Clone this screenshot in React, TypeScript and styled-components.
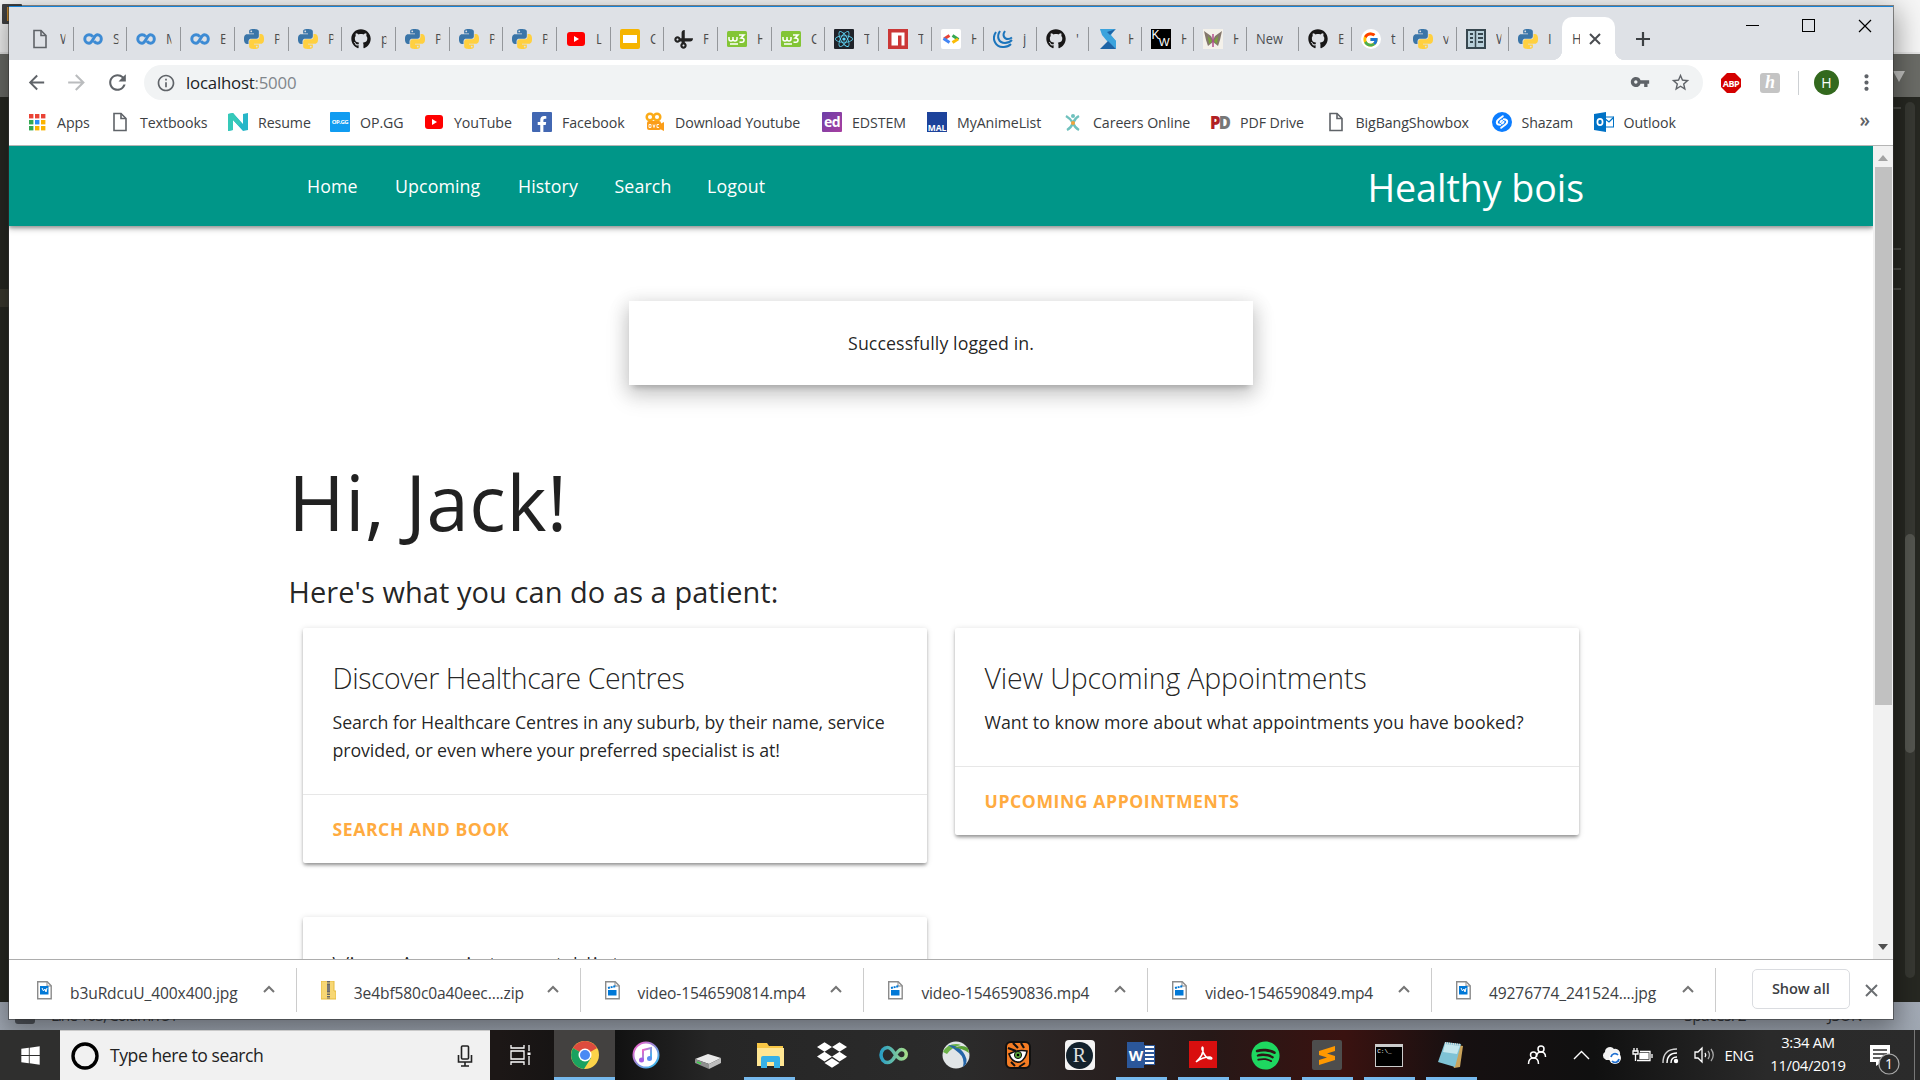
import React from 'react';
import styled, { createGlobalStyle, css } from 'styled-components';
import { FaGithub, FaReact, FaDropbox, FaSpotify, FaWindows, FaFacebookF, FaCut } from 'react-icons/fa';
import { FcGoogle } from 'react-icons/fc';
import { MdVpnKey, MdStarBorder, MdMoreVert, MdInfoOutline, MdArrowBack, MdArrowForward, MdRefresh } from 'react-icons/md';

const Global = createGlobalStyle`
  *, *::before, *::after { box-sizing: border-box; }
  body { margin: 0; overflow: hidden; font-family: 'Open Sans', 'Noto Sans', sans-serif; }
  svg { display: block; flex: none; }
  h1, h2, h3, p { margin: 0; font-weight: 400; }
`;

const Desktop = styled.div`
  position: relative; width: 1920px; height: 1080px; overflow: hidden;
  display: flex; flex-direction: column; background: #272822;
`;
const EditorTitle = styled.div`
  height: 54px; background: #f6f6f6; border-bottom: 2px solid #e6e6e6; padding: 4px 2px;
  display: flex; align-items: flex-start;
`;
const EditorLogo = styled.div`width: 20px; height: 20px; background: #424242; border-radius: 1px; border-left: 5px solid #424242; display: flex; &::before { content: ''; width: 6px; height: 14px; margin-top: 3px; background: #c98a2a; }`;
const EditorTabs = styled.div`
  height: 43px; background: #6b6c67; display: flex; justify-content: flex-end; align-items: center; padding-right: 15px;
`;
const EditorBody = styled.div`flex: 1; display: flex; justify-content: space-between; background: #272822;`;
const Gutter = styled.div`width: 9px; padding-top: 192px; &::before { content: ''; display: block; height: 18px; background: #3a392f; }`;
const Minimap = styled.div`width: 12px; display: flex; flex-direction: column; gap: 18px; padding-top: 10px; i { height: 2px; width: 8px; background: #4a4b45; }
  i:nth-child(2) { margin-top: 121px; }`;
const EditorScroll = styled.div`width: 10px; margin: 5px 5px 24px 0; border-radius: 5px; background: #383933; padding-top: 432px; &::before { content: ''; display: block; height: 219px; border-radius: 5px; background: #565751; }`;
const EditorSide = styled.div`display: flex; width: 27px;`;
const EditorStatus = styled.div`
  height: 28px; background: linear-gradient(#a4abb7, #a0a8b3); display: flex; align-items: flex-start; padding: 1px 58px 0 15px;
  font-size: 16px; line-height: 24px; color: #33363b;
`;
const StatusIcon = styled.div`width: 20px; height: 21px; border-radius: 3px; background: #50545b; margin-right: 16px;`;
const StatusText = styled.span<{ $ml?: string; $ls?: number }>`margin-left: ${p => p.$ml ?? '0'}; letter-spacing: ${p => p.$ls ?? -0.6}px; font-size: 15.5px;`;

const Browser = styled.div`
  position: absolute; left: 9px; top: 6px; width: 1884px; height: 1013px; background: #fff;
  border-top: 1px solid #1883d7; display: flex; flex-direction: column;
  box-shadow: 0 0 0 1px rgba(50,50,50,.55), 0 8px 26px 4px rgba(0,0,0,.38);
`;

/* tab strip */
const TabStrip = styled.div`height: 53px; background: #dee1e6; display: flex; padding-left: 12px; position: relative;`;
const Tab = styled.div<{ $w: number; $last?: boolean }>`
  width: ${p => p.$w}px; margin: 20px 0 9px; height: 24px; padding-left: 9px; display: flex; align-items: center; gap: 10px;
  border-right: ${p => (p.$last ? 0 : 1)}px solid #94979b; flex: none; overflow: hidden; font-size: 14.3px; color: #4a4d51;
`;
const TabIcon = styled.span`width: 20px; height: 20px; display: grid; place-items: center; flex: none;`;
const TabLetter = styled.span<{ $w?: number }>`width: ${p => p.$w ?? 6}px; overflow: hidden; white-space: nowrap; line-height: 20px; transform: scaleX(.9); transform-origin: left;`;
const Tilted = styled.span`transform: rotate(-45deg);`;
const ActiveTab = styled.div`
  width: 53px; height: 43px; margin-top: 10px; background: #fff; border-radius: 10px 10px 0 0; position: relative; flex: none;
  display: flex; align-items: center; gap: 8px; padding-left: 10px; font-size: 14.3px; color: #4a4d51;
  &::before, &::after { content: ''; position: absolute; bottom: 0; width: 10px; height: 10px; }
  &::before { left: -10px; background: radial-gradient(circle at 0 0, transparent 10px, #fff 10.5px); }
  &::after { right: -10px; background: radial-gradient(circle at 100% 0, transparent 10px, #fff 10.5px); }
`;
const NewTab = styled.div`margin: 24px 0 0 20px;`;
const WindowButtons = styled.div`margin-left: auto; display: flex; gap: 43px; padding: 12px 21px 0 0;`;

/* toolbar */
const Toolbar = styled.div`height: 43px; display: flex; align-items: center; padding: 2px 14px 0 16px; color: #5f6368; margin-bottom: 2px;`;
const NavIcons = styled.div`display: flex; gap: 16px; width: 119px; align-items: center;`;
const Omnibox = styled.div`
  width: 1559px; height: 35px; border-radius: 18px; background: #f1f3f4; display: flex; align-items: center; padding: 0 12px; flex: none;
`;
const Url = styled.span`margin-left: 10px; flex: 1; font-size: 16.8px; color: #202124; letter-spacing: -0.2px; em { font-style: normal; color: #80868b; }`;
const OmniIcons = styled.div`display: flex; gap: 20px; color: #5f6368;`;
const Extensions = styled.div`display: flex; align-items: center; flex: 1; margin-left: 17px;`;
const Honey = styled.span`width: 20px; height: 20px; border-radius: 3px; background: #c4c4c4; color: #fff; margin-left: 18px; font: italic 700 18px/19px 'Liberation Serif', serif; text-align: center; flex: none;`;
const Divider = styled.i`width: 1px; height: 24px; background: #cdd0d3; margin-left: 18px; margin-right: 15px; flex: none;`;
const Avatar = styled.span`width: 25px; height: 25px; border-radius: 50%; background: #33691e; color: #fff; font-size: 14px; display: grid; place-items: center; margin-right: 14px; flex: none;`;
const More3 = styled.span`width: 25px; flex: none; margin-left: 1px;`;

/* bookmarks */
const Bookmarks = styled.div`height: 41px; display: flex; align-items: center; padding: 0 0 6px 19px; border-bottom: 1px solid #b5b5b5;`;
const Bookmark = styled.div<{ $w: number }>`
  width: ${p => p.$w}px; flex: none; display: flex; align-items: center; gap: 10px; font-size: 14.2px; color: #3c4043;
  letter-spacing: -0.08px; white-space: nowrap;
`;
const More = styled.span`margin-left: auto; margin-right: 23px; font-size: 19px; line-height: 20px; font-weight: 600; color: #5f6368; margin-top: -4px;`;

/* page */
const Viewport = styled.div`height: 813px; display: flex; overflow: hidden; flex: none;`;
const Page = styled.div`width: 1864px; color: rgba(0,0,0,.87); overflow: hidden;`;
const Nav = styled.nav`
  height: 80px; background: #009688; color: #fff; padding: 0 280px; display: flex; justify-content: space-between; align-items: center;
  box-shadow: 0 2px 3px rgba(0,0,0,.22), 0 4px 6px rgba(0,0,0,.14), 0 1px 6px rgba(0,0,0,.16);
`;
const NavLinks = styled.div`display: flex; font-size: 17.8px; padding-left: 18px; padding-bottom: 1px;`;
const NavLink = styled.a<{ $w: number }>`width: ${p => p.$w}px; letter-spacing: 0.1px;`;
const Brand = styled.a`font-size: 37.6px; letter-spacing: -0.05px; margin-right: 9px; padding-top: 2px;`;
const Toast = styled.div`
  width: 624px; height: 84px; margin: 75px auto 0; background: #fff; display: grid; place-items: center; font-size: 17.8px; letter-spacing: 0.08px;
  box-shadow: 0 10px 21px 2px rgba(0,0,0,.14), 0 4px 18px 2px rgba(0,0,0,.12), 0 6px 6px -4px rgba(0,0,0,.2);
`;
const Container = styled.div`width: 1305px; margin: 0 auto;`;
const Greeting = styled.h1`font-size: 76px; line-height: 87px; margin-top: 73px; letter-spacing: 0.6px;`;
const Subheading = styled.h2`font-size: 29px; line-height: 34px; margin-top: 30px; letter-spacing: 0.06px;`;
const CardGrid = styled.div`display: grid; grid-template-columns: 624px 624px; column-gap: 28px; row-gap: 54px; padding: 19px 14px 0; align-items: start;`;
const Card = styled.section`
  background: #fff; border-radius: 2px;
  box-shadow: 0 2px 3px rgba(0,0,0,.2), 0 4px 4px -2px rgba(0,0,0,.2), 0 1px 6px rgba(0,0,0,.14);
`;
const CardContent = styled.div`padding: 30px;`;
const CardTitle = styled.h3<{ $ls: number }>`font-size: 28.5px; line-height: 40px; margin-bottom: 10px; font-weight: 300; white-space: nowrap; letter-spacing: ${p => p.$ls}px;`;
const CardText = styled.p<{ $ls: number }>`font-size: 17.8px; line-height: 28.1px; letter-spacing: ${p => p.$ls}px; white-space: pre-line;`;
const CardAction = styled.a`
  display: block; border-top: 1px solid rgba(160,160,160,.25); padding: 20px 30px; font-size: 17.6px; line-height: 28px; font-weight: 700; color: #ffab40;
  text-transform: uppercase; letter-spacing: 0.58px;
`;
const Scrollbar = styled.div`
  width: 20px; background: #f1f1f1; display: flex; flex-direction: column; justify-content: space-between; align-items: center; padding: 9px 0;
`;
const Thumb = styled.i`width: 17px; height: 538px; background: #c1c1c1; margin: 6px 0 auto;`;

/* downloads */
const Downloads = styled.div`height: 60px; border-top: 1px solid #adadad; display: flex; padding: 8px 0 7px 4px; flex: none;`;
const Download = styled.div`
  width: 283.8px; height: 44px; border-right: 1px solid #ccc; padding: 2px 21px 0 24px; display: flex; align-items: center; color: #3c4043; flex: none;
`;
const FileName = styled.span`flex: 1; margin: 4px 0 0 18px; font-size: 15.6px; letter-spacing: -0.13px; white-space: nowrap;`;
const ShowAll = styled.button`
  width: 98px; height: 40px; margin: 1px 15px 0 36px; border: 1px solid #dadce0; border-radius: 5px; background: #fff; padding: 0 0 2px;
  font: 600 14.6px 'Open Sans', sans-serif; color: #3c4043; letter-spacing: -0.1px;
`;

/* taskbar */
const Taskbar = styled.div`height: 50px; display: flex; background: linear-gradient(90deg, #1c1716 26%, #111 32%, #262626 37%, #2b2b2b 50%, #261817 63%, #3a1210 70%, #161011 76%, #101010 83%, #2a2a2a 92%, #2b2b2b); color: #fff; position: relative;`;
const Start = styled.div`width: 60px; background: #2f2f2e; display: grid; place-items: center;`;
const SearchBox = styled.div`
  width: 430px; background: #f1f1f1; border-top: 1px solid #c9c9c9; display: flex; align-items: center; padding: 0 17px 0 11px; color: #222;
  span { flex: 1; margin-left: 11px; font-size: 17.6px; letter-spacing: -0.45px; padding-bottom: 1px; }
`;
const TaskItem = styled.div<{ $active?: boolean; $open?: boolean; $w?: number }>`
  width: ${p => p.$w ?? 61.95}px; display: grid; place-items: center; flex: none;
  ${p => p.$open && css`background: linear-gradient(#76b9ed, #76b9ed) center bottom / 51px 3px no-repeat;`}
  ${p => p.$active && css`background: #434140; border-bottom: 3px solid #76b9ed; padding-top: 3px;`}
`;
const Tray = styled.div`margin-left: auto; display: flex; align-items: center; margin-right: 5px; border-right: 1px solid #777;`;
const TrayIcon = styled.span<{ $w: number }>`width: ${p => p.$w}px; display: grid; place-items: center; flex: none;`;
const Lang = styled.span`font-size: 14.8px; width: 32px; text-align: center; letter-spacing: -0.3px;`;
const Clock = styled.div`width: 90px; text-align: center; font-size: 14.8px; line-height: 23.5px; letter-spacing: -0.3px; padding-bottom: 2px; margin-left: 8px;`;
const Notifications = styled.div`width: 61px; padding-left: 16px; padding-top: 5px;`;

const pyPath = 'M14.25.18l.9.2.73.26.59.3.45.32.34.34.25.34.16.33.1.3.04.26.02.2-.01.13V8.5l-.05.63-.13.55-.21.46-.26.38-.3.31-.33.25-.35.19-.35.14-.33.1-.3.07-.26.04-.21.02H8.77l-.69.05-.59.14-.5.22-.41.27-.33.32-.27.35-.2.36-.15.37-.1.35-.07.32-.04.27-.02.21v3.06H3.17l-.21-.03-.28-.07-.32-.12-.35-.18-.36-.26-.36-.36-.35-.46-.32-.59-.28-.73-.21-.88-.14-1.05-.05-1.23.06-1.22.16-1.04.24-.87.32-.71.36-.57.4-.44.42-.33.42-.24.4-.16.36-.1.32-.05.24-.01h.16l.06.01h8.16v-.83H6.18l-.01-2.75-.02-.37.05-.34.11-.31.17-.28.25-.26.31-.23.38-.2.44-.18.51-.15.58-.12.64-.1.71-.06.77-.04.84-.02 1.27.05zm-6.3 1.98l-.23.33-.08.41.08.41.23.34.33.22.41.09.41-.09.33-.22.23-.34.08-.41-.08-.41-.23-.33-.33-.22-.41-.09-.41.09z';
const Python = () => (
  <svg width="20" height="20" viewBox="0 0 24 24">
    <path d={pyPath} fill="#3a75a8" /><path d={pyPath} fill="#ffd040" transform="rotate(180 12 12)" />
  </svg>
);
const Doc = () => (
  <svg width="20" height="20" viewBox="0 0 20 20" fill="none" stroke="#5f6368" strokeWidth="1.6">
    <path d="M4 1.5h7l5 5v12H4z" /><path d="M11 1.5v5h5" />
  </svg>
);
const Coursera = () => (
  <svg width="20" height="20" viewBox="0 0 20 20" fill="none" stroke="#3d8bd4" strokeWidth="3">
    <path d="M9.800 7.600C8.800 6.400 7.600 5.800 6 5.800a4.200 4.200 0 1 0 0 8.400c4 0 4.500-8.400 8.500-8.400a3.800 4.200 0 0 1 0 8.400c-1.700 0-2.700-.8-3.600-2" />
  </svg>
);
const YouTube = () => (
  <svg width="20" height="20" viewBox="0 0 20 20"><rect x="1" y="3" width="18" height="14" rx="3" fill="#f00" /><path d="M8 7l5 3-5 3z" fill="#fff" /></svg>
);
const Slides = () => (
  <svg width="20" height="20" viewBox="0 0 20 20"><rect width="20" height="20" rx="2" fill="#f5b400" /><rect x="3" y="6" width="14" height="8" fill="#fff" /></svg>
);
const Square = styled.span<{ $bg: string; $size: number; $r?: number; $end?: boolean; $ls?: number }>`
  width: 20px; height: 20px; flex: none; background: ${p => p.$bg}; color: #fff; border-radius: ${p => p.$r ?? 0}px;
  display: flex; align-items: ${p => (p.$end ? 'flex-end' : 'center')}; justify-content: center;
  font-size: ${p => p.$size}px; line-height: 1; font-weight: 700; letter-spacing: ${p => p.$ls ?? -0.5}px; overflow: hidden;
`;
const KwMark = styled.span`width: 20px; height: 20px; background: #000; color: #fff; display: flex; font-size: 12px; line-height: 12px; padding: 0 1px; font-family: 'Liberation Sans', sans-serif; b { font-weight: 400; } b + b { margin: 7px 0 0 -1px; font-size: 11.5px; }`;
const W3 = () => (
  <svg width="20" height="20" viewBox="0 0 20 20"><rect y="2" width="20" height="16" rx="1.500" fill="#83c536" />
    <path d="M2 8v2q0 2 2 2t2-2V8v2q0 2 2 2t2-2V8M12 6h5l-3 3q3.500 0 3 2.500T12.500 13M3 15h8" fill="none" stroke="#fff" strokeWidth="1.500" /></svg>
);
const Npm = () => (<svg width="20" height="20"><rect width="20" height="20" fill="#cb3837" /><path d="M3.500 3.500h13v13h-3v-10h-3.500v10H3.500z" fill="#fff" /></svg>);
const GDev = () => (
  <svg width="20" height="20" fill="none" strokeWidth="3"><rect width="20" height="20" rx="2" fill="#fff" />
    <path d="M8.500 6.500L3 10" stroke="#e94335" /><path d="M2.500 9.500l6 4" stroke="#4285f4" /><path d="M11.500 6.500l6 4" stroke="#34a853" /><path d="M17 10l-5.500 3.500" stroke="#fbbc05" /></svg>
);
const JQuery = () => (
  <svg width="20" height="20" fill="none" stroke="#1c75bc" strokeWidth="2"><path d="M3 3C-2 10 3 19 11 18q4 0 7-3" /><path d="M7 2C3 8 6 14 12 14q4 0 7-3" /><path d="M12 2c-3 4-1 8 3 8q2 0 4-1.500" /></svg>
);
const SLogo = () => (<svg width="20" height="20"><path d="M2 0h15l-4 6 5 6v8l-8-8-2-2z" fill="#3ba3dd" /><path d="M2 0l2 6 5 6 9 8V12l-6-6z" fill="#3ba3dd" /><path d="M2 20l8-8 8 8z" fill="#1d63a5" /><path d="M18 0l-6 6-3-3z" fill="#1d63a5" /></svg>);
const Butterfly = () => (
  <svg width="20" height="20"><rect width="20" height="20" fill="#f4f1ea" /><path d="M1 2l7 5 2 4 2-4 7-5-2 9-2 6-5-4-5 4-2-6z" fill="#84776c" /><path d="M5 7l4 5-3 3zM15 7l-4 5 3 3z" fill="#7ba43c" /><path d="M10 5v13" stroke="#b44a8c" strokeWidth="1.500" /></svg>
);
const Book = () => (
  <svg width="20" height="20"><rect x="1" y="1" width="18" height="18" fill="#b9d0da" stroke="#37474f" strokeWidth="2" /><path d="M9.500 1v18" stroke="#37474f" strokeWidth="1.500" />
    <path d="M12 5h5M12 9h5M12 13h5M4 5h3M4 9h3M4 13h3" stroke="#37474f" strokeWidth="2" /></svg>
);
const Apps = () => {
  const c = ['#ea4335', '#ea4335', '#ea4335', '#34a853', '#2a8cf7', '#fbb300', '#34a853', '#fbb300', '#fbb300'];
  return <svg width="19" height="20">{c.map((f, i) => <rect key={i} x={1 + (i % 3) * 6} y={2 + Math.floor(i / 3) * 6} width="4.400" height="4.400" fill={f} />)}</svg>;
};
const Resume = () => (<svg width="20" height="20"><path d="M0 2l5-1 10 11V2l5-1v17l-5 1L5 8v10l-5 1z" fill="#27b6c8" /><path d="M0 2l5-1 8 10-2 3-6-6v10l-5 1z" fill="#36c9b9" /></svg>);
const Facebook = styled.span`width: 20px; height: 20px; background: #4267b2; border-radius: 1px; display: flex; align-items: flex-end; justify-content: flex-end; padding-right: 2px; color: #fff; flex: none;`;
const Camera = () => (
  <svg width="20" height="20"><circle cx="5" cy="5" r="3.300" fill="none" stroke="#fbab18" strokeWidth="2.500" /><circle cx="12" cy="5" r="3.300" fill="none" stroke="#fbab18" strokeWidth="2.500" /><rect x="2" y="9" width="14" height="9" rx="2" fill="#fb9d18" /><path d="M15 12l4-2v9l-4-2z" fill="#fb9d18" /><path d="M4 12.500h2v3H4zM8 12.500l1 3 1-3M14 12.500h-2v3h2" fill="none" stroke="#fff" strokeWidth=".9" /></svg>
);
const Careers = () => (
  <svg width="20" height="20" fill="none" stroke="#6fc1bd" strokeWidth="2.400"><path d="M3 4q5 3 7 7 2-5 6-7M4 18q4-2 6-7 2 5 6 7" /><circle cx="10" cy="4" r="2" fill="#6fc1bd" stroke="none" /><circle cx="10" cy="11" r="2" fill="#f2a33a" stroke="none" /></svg>
);
const PdMark = styled.span`width: 20px; font-size: 18px; line-height: 20px; font-weight: 800; letter-spacing: -2px; color: #b11f24; flex: none; transform: scaleX(.92); transform-origin: left; em { font-style: normal; color: #777; }`;
const Shazam = () => (
  <svg width="20" height="20"><circle cx="10" cy="10" r="10" fill="#0c7dff" /><g fill="none" stroke="#fff" strokeWidth="2" strokeLinecap="round"><path d="M8.200 12.800q-3.400 0-3.400-2.600 0-1.500 2-3l4-3" /><path d="M11.800 7.200q3.400 0 3.400 2.600 0 1.500-2 3l-4 3" /><path d="M8.500 10q.8-1.500 1.500-1.500M11.500 10q-.8 1.500-1.500 1.500" /></g></svg>
);
const Outlook = () => (
  <svg width="20" height="20"><rect x="10" y="5" width="9.500" height="10" fill="#fff" stroke="#0072c6" /><path d="M10 6l5 4 5-5" fill="none" stroke="#0072c6" strokeWidth="1.300" /><path d="M0 2l12-2v20L0 18z" fill="#0072c6" /><ellipse cx="6" cy="10" rx="2.600" ry="3.200" fill="none" stroke="#fff" strokeWidth="1.700" /></svg>
);
const Cross = ({ s, w, c }: { s: number; w: number; c: string }) => (
  <svg width={s} height={s} viewBox={`0 0 ${s} ${s}`}><path d={`M1 1L${s - 1} ${s - 1}M${s - 1} 1L1 ${s - 1}`} stroke={c} strokeWidth={w} /></svg>
);
const Caret = () => (<svg width="12" height="12"><path d="M1 7l5-5 5 5" fill="none" stroke="#757575" strokeWidth="2" /></svg>);
const FileIcon = ({ kind }: { kind: string }) =>
  kind === 'zip' ? (
    <svg width="15" height="21"><path d="M0 0h13v10h2v8H0z" fill="#f7d774" stroke="#e6bb3f" /><path d="M7.500 0v18" stroke="#666" strokeWidth="3" strokeDasharray="1.500 1" /><rect x="6" y="4" width="3" height="6" fill="#777" /></svg>
  ) : (
    <svg width="15" height="21"><path d="M.7.7h9.500l4 4v13H.7z" fill="#fff" stroke="#8b8b8b" strokeWidth="1.400" /><path d="M10 1v4h4" fill="none" stroke="#8b8b8b" />
      {kind === 'jpg' ? <><rect x="3" y="5" width="8.500" height="8.500" fill="#0078d7" /><path d="M5 7l1.500 3L8 8l1 3 1-4" stroke="#fff" fill="none" /></> : <><rect x="3" y="9" width="8.500" height="5.500" fill="#0078d7" /><path d="M3 7l8-2" stroke="#0078d7" strokeWidth="2" strokeDasharray="2 .7" /></>}
    </svg>
  );

const icons: Record<string, React.ReactNode> = {
  doc: <Doc />, co: <Coursera />, py: <Python />, gh: <FaGithub size={20} color="#181717" />, yt: <YouTube />, sl: <Slides />,
  cut: <Tilted><FaCut size={17} color="#222" /></Tilted>, w3: <W3 />, re: <Square $bg="#20232a" $size={10} $r={1}><FaReact size={18} color="#61dafb" /></Square>, npm: <Npm />, gd: <GDev />, jq: <JQuery />,
  s: <SLogo />, kw: <KwMark><b>K</b><b>W</b></KwMark>, bf: <Butterfly />, g: <Square $bg="#fff" $size={10} $r={10}><FcGoogle size={17} /></Square>, bk: <Book />,
};
const tabs: [string, string, number][] = [
  ['doc', 'W', 52.8], ['co', 'S', 53.7], ['co', 'M', 53.7], ['co', 'E', 53.7], ['py', 'P', 53.7], ['py', 'P', 53.7], ['gh', 'p', 53.7], ['py', 'P', 53.7],
  ['py', 'P', 53.7], ['py', 'P', 53.7], ['yt', 'L', 53.7], ['sl', 'C', 53.7], ['cut', 'F', 53.7], ['w3', 'H', 53.7], ['w3', 'C', 53.7], ['re', 'T', 53.7],
  ['npm', 'T', 52.5], ['gd', 'H', 52.5], ['jq', 'j', 52.5], ['gh', "'", 52.5], ['s', 'H', 52.5], ['kw', 'H', 52.5], ['bf', 'H', 52.5], ['', 'New', 52.5],
  ['gh', 'E', 52.5], ['g', 't', 52.5], ['py', 'v', 52.5], ['bk', 'W', 52.5], ['py', 'I', 52.5],
];
const bookmarks: [React.ReactNode, string, number][] = [
  [<Apps />, 'Apps', 82], [<Doc />, 'Textbooks', 118], [<Resume />, 'Resume', 102], [<Square $bg="#109cf1" $size={6} $r={1}>OP.GG</Square>, 'OP.GG', 94],
  [<YouTube />, 'YouTube', 108], [<Facebook><FaFacebookF size={16} /></Facebook>, 'Facebook', 113], [<Camera />, 'Download Youtube', 177],
  [<Square $bg="linear-gradient(135deg,#6c3fa8,#a83fa0)" $size={14} $r={1}>ed</Square>, 'EDSTEM', 105], [<Square $bg="#1d439b" $size={8.5} $end $ls={0}>MAL</Square>, 'MyAnimeList', 136],
  [<Careers />, 'Careers Online', 147], [<PdMark>P<em>D</em></PdMark>, 'PDF Drive', 115.5], [<Doc />, 'BigBangShowbox', 166], [<Shazam />, 'Shazam', 102], [<Outlook />, 'Outlook', 100],
];
const files: [string, string][] = [
  ['jpg', 'b3uRdcuU_400x400.jpg'], ['zip', '3e4bf580c0a40eec....zip'], ['mp4', 'video-1546590814.mp4'], ['mp4', 'video-1546590836.mp4'], ['mp4', 'video-1546590849.mp4'], ['jpg', '49276774_241524....jpg'],
];

const Chrome = () => (
  <svg width="28" height="28" viewBox="0 0 28 28"><circle cx="14" cy="14" r="14" fill="#fcd349" /><path d="M14 14L1.900 7A14 14 0 0 1 26.100 7z" fill="#dd4b3e" /><path d="M2 7A14 14 0 0 0 13 28l7-11-6-3z" fill="#1aa260" /><circle cx="14" cy="14" r="6.500" fill="#fff" /><circle cx="14" cy="14" r="5" fill="#4a8af4" /></svg>
);
const Music = () => (
  <svg width="28" height="28"><defs><linearGradient id="mu" x2="1" y2="1"><stop stopColor="#fb5bc5" /><stop offset="1" stopColor="#27c3f3" /></linearGradient></defs><circle cx="14" cy="14" r="12.500" fill="#fff" stroke="url(#mu)" strokeWidth="2" /><path d="M11 19V9l8-2v10" fill="none" stroke="url(#mu)" strokeWidth="2" /><circle cx="9.500" cy="19" r="2.500" fill="#a55be5" /><circle cx="17.500" cy="17.500" r="2.500" fill="#5b8ef0" /></svg>
);
const Drive = () => (<svg width="28" height="28"><g transform="translate(0 3)"><path d="M1 15l13-5 13 4-12 6z" fill="#e9e9e9" /><path d="M1 15l14 5v5L1 19z" fill="#8f8f8f" /><path d="M27 14l-12 6v5l12-6z" fill="#bcbcbc" /><path d="M3 18l4 1.500" stroke="#3ad04a" strokeWidth="1.500" /></g></svg>);
const Folder = () => (<svg width="28" height="28"><path d="M1 2h10l2 3h14v20H1z" fill="#f9c846" /><path d="M1 7h27v18H1z" fill="#ffe693" /><path d="M5 27V17q0-2 2-2h15q2 0 2 2v10h-6v-6h-7v6z" fill="#36b1e7" /></svg>);
const Loop = () => (<svg width="30" height="24" viewBox="0 0 30 24" fill="none" strokeWidth="3.500"><defs><linearGradient id="lp"><stop stopColor="#2a9fc4" /><stop offset="1" stopColor="#a4dc8a" /></linearGradient></defs><path d="M15 15q-3 4.500-6.500 4.500a6.500 7.500 0 0 1 0-15C15 4.500 16 16 22.500 16a4.500 4.500 0 0 0 0-9.500Q19 6.500 15 15z" stroke="url(#lp)" /></svg>);
const Orb = () => (
  <svg width="28" height="28"><circle cx="14" cy="14" r="13.500" fill="#e1e5e7" /><path d="M1 11q4-8 13-8 3 0 5 1-9 2-14 9z" fill="#6bb248" /><path d="M6 4q10 0 15 7t3 12l-3 3q2-9-4-14T6 4z" fill="#2465a8" /><path d="M12 7q8-4 14 0l1 5q-7-5-15-5z" fill="#5aa136" /></svg>
);
const Tiger = () => (<svg width="26" height="28"><rect x="1" y="1" width="24" height="26" rx="5" fill="#f47c24" stroke="#111" strokeWidth="2" /><path d="M3 7l8 3M8 2l5 5M16 2l3 5" stroke="#111" strokeWidth="2.200" fill="none" /><path d="M4 13q9-5 18-3-1 8-7 11-8 1-11-8z" stroke="#111" strokeWidth="1.600" fill="#fff" /><path d="M20 22l-6 4M6 21l4 4" stroke="#111" strokeWidth="2" /><circle cx="13" cy="14" r="3.600" fill="#58a53a" stroke="#111" /><circle cx="13" cy="14" r="1.300" /></svg>);
const Round = styled.span`width: 30px; height: 30px; border-radius: 4px; background: #f4f4f4; display: grid; place-items: center; span { width: 27px; height: 27px; border-radius: 50%; background: #12212c; color: #ddd; font: 20px/27px 'Liberation Serif', serif; text-align: center; }`;
const WordIcon = styled.span`
  width: 28px; height: 26px; display: flex; align-items: stretch; font-size: 15px; font-weight: 700; line-height: 26px; color: #fff;
  span { width: 17px; background: #2b579a; text-align: center; } i { flex: 1; margin: 3px 0; border: 1.5px solid #2b579a; background: repeating-linear-gradient(#fff 0 2px, #2b579a 2px 4px); }
`;
const Acrobat = () => (<svg width="28" height="28"><rect width="28" height="27" fill="#d90f0f" /><path d="M7 21q8-7 7-14-1-2-1 1 3 10 9 10 2-1-1-2-8 0-14 5z" fill="none" stroke="#fff" strokeWidth="1.600" /></svg>);
const Sublime = () => (<svg width="30" height="30"><rect width="30" height="30" rx="2" fill="#4d4d4d" /><path d="M7 11l16-5v5l-8 2.500 8 2.500v4L7 25v-5l8-2.500L7 15z" fill="#ff9800" /></svg>);
const CmdIcon = styled.span`width: 28px; height: 23px; background: #000; border: 1px solid #ccc; border-top-width: 3px; font: 6px 'Liberation Mono', monospace; color: #fff; padding: 1px;`;
const Notepad = () => (<svg width="28" height="28"><path d="M9 2l17 3-3 21-6 1z" fill="#c9a35b" /><path d="M8 1l16 2-6 23-17-5z" fill="#7fc3d6" /><path d="M8 3l15 2-3 8-14-2z" fill="#c5e7ee" /><path d="M8 2l16 2" stroke="#ddd" strokeWidth="2" strokeDasharray="1 1" /></svg>);

const taskItems: [React.ReactNode, boolean][] = [
  [<Music />, false], [<Drive />, false], [<Folder />, true], [<FaDropbox size={30} color="#fff" />, false], [<Loop />, false], [<Orb />, false], [<Tiger />, false],
  [<Round><span>R</span></Round>, false], [<WordIcon><span>W</span><i /></WordIcon>, true], [<Acrobat />, true], [<FaSpotify size={29} color="#1ed760" />, true], [<Sublime />, true],
  [<CmdIcon>C:\_</CmdIcon>, true], [<Notepad />, true],
];

export default function App() {
  return (
    <Desktop>
      <Global />
      <EditorTitle><EditorLogo /></EditorTitle>
      <EditorTabs><svg width="12" height="12"><path d="M0 1h12L6 12z" fill="#c3c3c1" /></svg></EditorTabs>
      <EditorBody>
        <Gutter />
        <EditorSide><Minimap><i /><i /><i /><i /></Minimap><EditorScroll /></EditorSide>
      </EditorBody>
      <EditorStatus><StatusIcon /><StatusText $ls={-1.1}>Line 103, Column 51</StatusText><StatusText $ml="auto">Spaces: 2</StatusText><StatusText $ml="82px">JSON</StatusText></EditorStatus>

      <Browser>
        <TabStrip>
          {tabs.map(([icon, letter, w], i) => (
            <Tab key={i} $w={w} $last={i === tabs.length - 1}>
              {icon && <TabIcon>{icons[icon]}</TabIcon>}
              <TabLetter $w={icon ? 6 : 36}>{letter}</TabLetter>
            </Tab>
          ))}
          <ActiveTab><TabLetter $w={9}>H</TabLetter><Cross s={12} w={2} c="#4a4d51" /></ActiveTab>
          <NewTab><svg width="16" height="16"><path d="M8 1v14M1 8h14" stroke="#3c4043" strokeWidth="2.200" /></svg></NewTab>
          <WindowButtons>
            <svg width="13" height="13"><path d="M0 6.500h13" stroke="#000" /></svg>
            <svg width="13" height="14"><rect x=".5" y=".5" width="12" height="12" fill="none" stroke="#000" /></svg>
            <Cross s={14} w={1.2} c="#000" />
          </WindowButtons>
        </TabStrip>
        <Toolbar>
          <NavIcons><MdArrowBack size={23} /><MdArrowForward size={25} color="#babcbe" /><MdRefresh size={25} /></NavIcons>
          <Omnibox>
            <MdInfoOutline size={20} />
            <Url>localhost<em>:5000</em></Url>
            <OmniIcons><MdVpnKey size={20} /><MdStarBorder size={21} /></OmniIcons>
          </Omnibox>
          <Extensions>
            <svg width="22" height="22"><path d="M7 1h8l6 6v8l-6 6H7l-6-6V7z" fill="#d40000" /><text x="11" y="14.500" fontSize="9" fontWeight="700" fill="#fff" textAnchor="middle" letterSpacing="-.4">ABP</text></svg>
            <Honey>h</Honey>
            <Divider /><Avatar>H</Avatar><More3><MdMoreVert size={25} /></More3>
          </Extensions>
        </Toolbar>
        <Bookmarks>
          {bookmarks.map(([icon, name, w]) => <Bookmark key={name} $w={w}>{icon}{name}</Bookmark>)}
          <More>»</More>
        </Bookmarks>

        <Viewport>
          <Page>
            <Nav>
              <NavLinks><NavLink $w={88}>Home</NavLink><NavLink $w={123}>Upcoming</NavLink><NavLink $w={96.5}>History</NavLink><NavLink $w={92.5}>Search</NavLink><NavLink $w={70}>Logout</NavLink></NavLinks>
              <Brand>Healthy bois</Brand>
            </Nav>
            <Toast>Successfully logged in.</Toast>
            <Container>
              <Greeting>Hi, Jack!</Greeting>
              <Subheading>Here's what you can do as a patient:</Subheading>
              <CardGrid>
                <Card>
                  <CardContent>
                    <CardTitle $ls={-0.45}>Discover Healthcare Centres</CardTitle>
                    <CardText $ls={-0.09}>{'Search for Healthcare Centres in any suburb, by their name, service\nprovided, or even where your preferred specialist is at!'}</CardText>
                  </CardContent>
                  <CardAction>Search and book</CardAction>
                </Card>
                <Card>
                  <CardContent>
                    <CardTitle $ls={-0.15}>View Upcoming Appointments</CardTitle>
                    <CardText $ls={0.03}>Want to know more about what appointments you have booked?</CardText>
                  </CardContent>
                  <CardAction>Upcoming appointments</CardAction>
                </Card>
                <Card>
                  <CardContent><CardTitle $ls={-0.15}>View Appointment History</CardTitle></CardContent>
                </Card>
              </CardGrid>
            </Container>
          </Page>
          <Scrollbar>
            <svg width="10" height="6"><path d="M0 6h10L5 0z" fill="#a3a3a3" /></svg>
            <Thumb />
            <svg width="10" height="6"><path d="M0 0h10L5 6z" fill="#505050" /></svg>
          </Scrollbar>
        </Viewport>

        <Downloads>
          {files.map(([kind, name]) => <Download key={name}><FileIcon kind={kind} /><FileName>{name}</FileName><Caret /></Download>)}
          <ShowAll>Show all</ShowAll>
          <TrayIcon $w={14}><Cross s={13} w={2} c="#6b6e72" /></TrayIcon>
        </Downloads>
      </Browser>

      <Taskbar>
        <Start><FaWindows size={21} color="#fff" /></Start>
        <SearchBox>
          <svg width="28" height="28"><circle cx="14" cy="14" r="12" fill="none" stroke="#000" strokeWidth="3.400" /></svg>
          <span>Type here to search</span>
          <svg width="16" height="22" fill="none" stroke="#222" strokeWidth="1.600"><rect x="4.500" y="1" width="7" height="13" rx="1" /><path d="M1.500 10v7h13v-7M8 17v4M4 21h8" /></svg>
        </SearchBox>
        <TaskItem $w={61}>
          <svg width="22" height="24" fill="none" stroke="#fff" strokeWidth="1.300"><path d="M1 2v3h13V2M1 22v-3h13v3M1 8h13v8H1zM19 2v6M19 13v9" /><rect x="17.500" y="9.500" width="3" height="2.500" fill="#fff" stroke="none" /></svg>
        </TaskItem>
        <TaskItem $w={3} />
        <TaskItem $active $w={61}><Chrome /></TaskItem>
        {taskItems.map(([icon, open], i) => <TaskItem key={i} $open={open}>{icon}</TaskItem>)}
        <Tray>
          <TrayIcon $w={56}><svg width="20" height="20" fill="none" stroke="#fff" strokeWidth="1.500"><circle cx="14" cy="4" r="3" /><path d="M9.500 12q0-5 4.500-5t4.500 5" /><circle cx="6.500" cy="10" r="3" /><path d="M1.500 19q0-6 5-6t5 6" /></svg></TrayIcon>
          <TrayIcon $w={32}><svg width="17" height="10"><path d="M1 9l7.500-7.500L16 9" fill="none" stroke="#fff" strokeWidth="1.400" /></svg></TrayIcon>
          <TrayIcon $w={30}><svg width="22" height="20"><path d="M4 14a4 4 0 0 1 0-7 5 5 0 0 1 9-3 5 5 0 0 1 6 6v5H5z" fill="#f3f3f3" /><circle cx="14" cy="13" r="6" fill="#fff" /><path d="M10 12a4 4 0 0 1 7-2M18 14a4 4 0 0 1-7 2" fill="none" stroke="#1f6fd0" strokeWidth="1.800" /></svg></TrayIcon>
          <TrayIcon $w={30}><svg width="21" height="15" fill="none" stroke="#fff" strokeWidth="1.300"><path d="M2 0v3M5 0v3M1 3h5v3H1zM3.500 6v7" /><path d="M8 3.500h10v9H5" /><rect x="8" y="5.500" width="8" height="5" fill="#fff" /><path d="M20 6v4" /></svg></TrayIcon>
          <TrayIcon $w={28}><svg width="18" height="18" fill="none" stroke="#fff" strokeWidth="1.400"><circle cx="14" cy="15" r="1.500" fill="#fff" /><path d="M9 17q0-6 6-6M5 17q0-10 10-10" /><path d="M1 17Q1 3 15 3" opacity=".8" /></svg></TrayIcon>
          <TrayIcon $w={38}><svg width="21" height="18" fill="none" stroke="#fff" strokeWidth="1.300"><path d="M1 6h3l4-4v14l-4-4H1zM11 7q1.500 2 0 4" /><path d="M14 5q3 4 0 8M17 3q4.500 6 0 12" opacity=".6" /></svg></TrayIcon>
          <Lang>ENG</Lang>
          <Clock>3:34 AM<br />11/04/2019</Clock>
          <Notifications>
            <svg width="38" height="36"><path d="M1 5h20v17h-8l-6 4v-4H1z" fill="#fff" /><path d="M4 10h14M4 14h14M4 18h9" stroke="#2b2b2b" strokeWidth="1.500" /><circle cx="20" cy="24" r="10" fill="#2b2b2b" stroke="#aaa" strokeWidth="1.200" /><text x="20" y="29" fontSize="14" fill="#fff" textAnchor="middle">1</text></svg>
          </Notifications>
        </Tray>
      </Taskbar>
    </Desktop>
  );
}
